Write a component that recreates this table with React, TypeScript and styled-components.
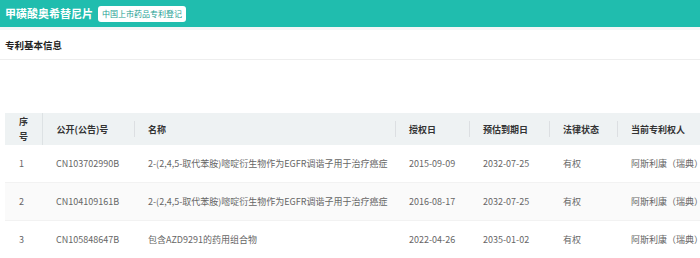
import styled, { createGlobalStyle } from 'styled-components';

interface Patent {
    no: string;
    name: string;
    grantDate: string;
    expiryDate: string;
    status: string;
    owner: string;
}

const patents: Patent[] = [
    {
        no: 'CN103702990B',
        name: '2-(2,4,5-取代苯胺)嘧啶衍生物作为EGFR调谐子用于治疗癌症',
        grantDate: '2015-09-09',
        expiryDate: '2032-07-25',
        status: '有权',
        owner: '阿斯利康（瑞典）',
    },
    {
        no: 'CN104109161B',
        name: '2-(2,4,5-取代苯胺)嘧啶衍生物作为EGFR调谐子用于治疗癌症',
        grantDate: '2016-08-17',
        expiryDate: '2032-07-25',
        status: '有权',
        owner: '阿斯利康（瑞典）',
    },
    {
        no: 'CN105848647B',
        name: '包含AZD9291的药用组合物',
        grantDate: '2022-04-26',
        expiryDate: '2035-01-02',
        status: '有权',
        owner: '阿斯利康（瑞典）',
    },
];

const columns = [
    { title: '序号', width: 37 },
    { title: '公开(公告)号', width: 92 },
    { title: '名称', width: 261 },
    { title: '授权日', width: 74 },
    { title: '预估到期日', width: 80 },
    { title: '法律状态', width: 68 },
    { title: '当前专利权人', width: 110 },
];

const App = () => {
    return (
        <Page>
            <GlobalStyle />
            <Header>
                <Title>甲磺酸奥希替尼片</Title>
                <Badge>中国上市药品专利登记</Badge>
            </Header>
            <Strip />
            <SectionTitle>专利基本信息</SectionTitle>
            <TableWrapper>
                <Table>
                    <colgroup>
                        {columns.map((c) => (
                            <col key={c.title} style={{ width: c.width }} />
                        ))}
                    </colgroup>
                    <thead>
                        <tr>
                            {columns.map((c, i) => (
                                <HeadCell key={c.title} $first={i === 0}>
                                    {c.title}
                                </HeadCell>
                            ))}
                        </tr>
                    </thead>
                    <tbody>
                        {patents.map((p, i) => (
                            <Row key={p.no} $striped={i % 2 === 1}>
                                <Cell>{i + 1}</Cell>
                                <Cell>{p.no}</Cell>
                                <Cell>{p.name}</Cell>
                                <Cell>{p.grantDate}</Cell>
                                <Cell>{p.expiryDate}</Cell>
                                <Cell>{p.status}</Cell>
                                <Cell>{p.owner}</Cell>
                            </Row>
                        ))}
                    </tbody>
                </Table>
            </TableWrapper>
        </Page>
    );
};

const GlobalStyle = createGlobalStyle`
    body {
        margin: 0;
        background: #fff;
        font-family: "Noto Sans CJK SC", "Noto Sans", sans-serif;
    }
`;

const Page = styled.div`
    width: 700px;
    height: 258px;
    overflow: hidden;
`;

const Header = styled.div`
    display: flex;
    align-items: center;
    gap: 5px;
    height: 27px;
    padding-left: 5px;
    background: #20bdae;
`;

const Title = styled.span`
    color: #fff;
    font-size: 11px;
    font-weight: 700;
    line-height: 1;
`;

const Badge = styled.span`
    display: flex;
    align-items: center;
    height: 16px;
    padding: 0 4px;
    border-radius: 3px;
    background: #fff;
    color: #1a9e92;
    font-size: 8px;
`;

const Strip = styled.div`
    height: 3px;
    background: #f5f6f7;
`;

const SectionTitle = styled.div`
    display: flex;
    align-items: center;
    height: 29px;
    padding-left: 5px;
    border-bottom: 1px solid #eeeeee;
    color: #222;
    font-size: 9.5px;
    font-weight: 700;
`;

const TableWrapper = styled.div`
    margin-top: 53px;
    padding-left: 5px;
    overflow: hidden;
`;

const Table = styled.table`
    width: 722px;
    table-layout: fixed;
    border-collapse: collapse;
`;

const HeadCell = styled.th<{ $first?: boolean }>`
    position: relative;
    height: 32px;
    padding: 0 14px;
    background: #eef2f3;
    color: #333;
    font-size: 9px;
    font-weight: 700;
    line-height: 15px;
    text-align: left;
    white-space: normal;
    border-right: ${({ $first }) => ($first ? '1px solid #dde2e4' : 'none')};

    & + &::before {
        content: '';
        position: absolute;
        left: 0;
        top: 50%;
        width: 1px;
        height: 16px;
        transform: translateY(-50%);
        background: #dcdfe2;
    }
`;

const Row = styled.tr<{ $striped?: boolean }>`
    background: ${({ $striped }) => ($striped ? '#fafafa' : '#fff')};
    border-bottom: 1px solid #f2f2f2;
`;

const Cell = styled.td`
    height: 37px;
    padding: 0 14px;
    color: #666;
    font-size: 9px;
    white-space: nowrap;
    overflow: hidden;
`;

export default App;
